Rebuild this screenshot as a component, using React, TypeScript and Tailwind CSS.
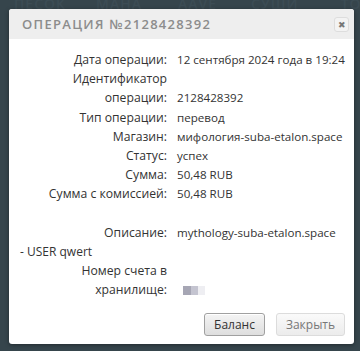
import React from "react";

const rows: { label: React.ReactNode; value?: React.ReactNode }[] = [
  { label: "Дата операции:", value: "12 сентября 2024 года в 19:24" },
  { label: (<>Идентификатор<br />операции:</>), value: "2128428392" },
  { label: "Тип операции:", value: "перевод" },
  { label: "Магазин:", value: "мифология-suba-etalon.space" },
  { label: "Статус:", value: "успех" },
  { label: "Сумма:", value: "50,48 RUB" },
  { label: "Сумма с комиссией:", value: "50,48 RUB" },
];

function Row({ label, value }: { label: React.ReactNode; value?: React.ReactNode }) {
  return (
    <div className="flex items-end">
      <div className="w-[158px] text-right whitespace-nowrap text-[12.2px]">{label}</div>
      <div className="ml-[10px] whitespace-nowrap text-[11.6px]">{value}</div>
    </div>
  );
}

export default function App() {
  return (
    <div
      className="relative w-[360px] h-[351px] bg-[#36454c] overflow-hidden"
      style={{ fontFamily: '"Open Sans", "Noto Sans", sans-serif' }}
    >
      <div className="absolute left-0 top-[-7px] flex text-[14px] font-semibold tracking-[1px] text-[#3c4c54] whitespace-nowrap">
        <span className="ml-[14px]">ПЕСОК</span>
        <span className="ml-[30px]">МАНА</span>
        <span className="ml-[36px]">ААVE</span>
        <span className="ml-[34px]">СУШИ</span>
        <span className="ml-[42px]">ТОРТ</span>
      </div>
      <div className="relative ml-[9px] mt-[9px] w-[345px] h-[335px] bg-white rounded-[3px] shadow-[0_1px_4px_rgba(0,0,0,0.4)] flex flex-col">
        <div className="h-[30px] bg-[#eeeeee] rounded-t-[3px] flex items-center justify-between pl-[13px] pr-[5px]">
          <span className="text-[13px] font-semibold tracking-[1.3px] text-[#8c8c8c] mt-[2px]">ОПЕРАЦИЯ №2128428392</span>
          <span className="w-[15px] h-[15px] mt-[1px] rounded-[3px] border border-[#dddddd] bg-[#f3f3f3] flex items-center justify-center text-[9px] text-[#777] leading-none">✖</span>
        </div>
        <div className="pt-[11px] leading-[19.2px] text-[#333333]">
          {rows.map((r, i) => (
            <Row key={i} label={r.label} value={r.value} />
          ))}
          <div className="h-[19.2px]" />
          <Row label="Описание:" value="mythology-suba-etalon.space" />
          <div className="pl-[11px] text-[12px]">- USER qwert</div>
          <Row
            label={<>Номер счета в<br />хранилище:</>}
            value={
              <div className="flex h-[19px] items-center ml-[6px]">
                <div className="w-[8px] h-[9px] bg-[#a6a6b4]" />
                <div className="w-[7px] h-[9px] bg-[#c4c4d0]" />
                <div className="w-[7px] h-[9px] bg-[#eeeef2]" />
              </div>
            }
          />
        </div>
        <div className="mt-auto mb-[8px] mr-[9px] flex justify-end gap-[11px]">
          <button className="w-[61px] h-[23px] rounded-[3px] border border-[#a0a0a0] bg-gradient-to-b from-[#f4f4f4] to-[#dedede] text-[12px] text-[#333] shadow-[inset_0_1px_0_#fff]">
            Баланс
          </button>
          <button className="w-[69px] h-[23px] rounded-[3px] border border-[#dcdcdc] bg-gradient-to-b from-[#fafafa] to-[#ececec] text-[12px] text-[#777]">
            Закрыть
          </button>
        </div>
      </div>
    </div>
  );
}
